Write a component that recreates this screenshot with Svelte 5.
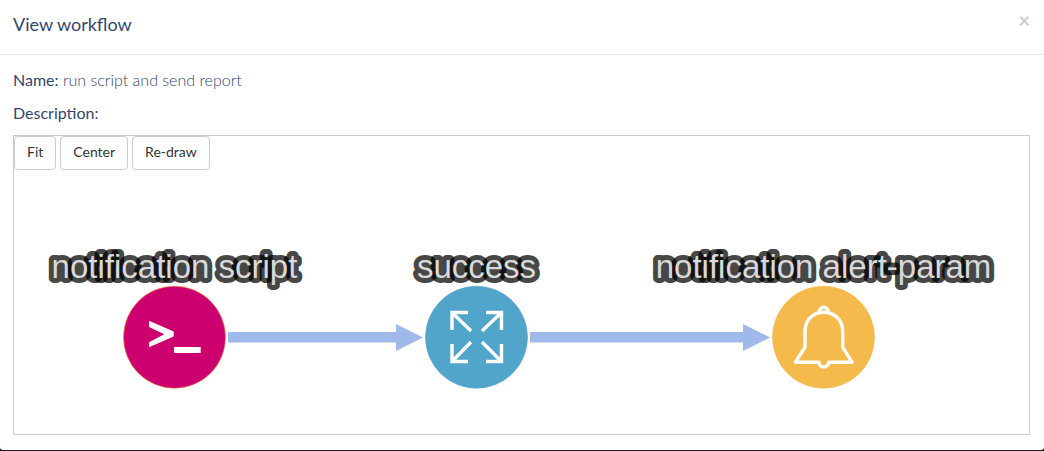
<script>
  const nodes = [
    { id: 'script', label: 'notification script', x: 160.5, fill: '#cc006e', edge: '#e8873a' },
    { id: 'success', label: 'success', x: 462.5, fill: '#51a5cb', edge: '#51a5cb' },
    { id: 'alert', label: 'notification alert-param', x: 809.5, fill: '#f4bb4c', edge: '#f4bb4c' },
  ];
  const edges = [
    { from: 214, to: 409 },
    { from: 516, to: 756 },
  ];
</script>

<div class="modal" role="dialog" aria-labelledby="title">
  <header>
    <h1 id="title">View workflow</h1>
    <button class="close" aria-label="Close">×</button>
  </header>
  <main>
    <p><strong>Name:</strong> run script and send report</p>
    <p><strong>Description:</strong></p>
    <section class="canvas">
      <div class="tools">
        <button>Fit</button>
        <button>Center</button>
        <button>Re-draw</button>
      </div>
      <svg viewBox="0 0 1015 298">
        {#each edges as e}
          <path d="M{e.from} 196H{e.to - 27}V188L{e.to} 201.5L{e.to - 27} 215V206.6H{e.from}Z" fill="#9fb9ea" />
        {/each}
        {#each nodes as n (n.id)}
          <circle cx={n.x} cy="201.2" r="51" fill={n.fill} stroke={n.edge} stroke-width="0.6" />
          <text class="outline" x={n.x} y="142">{n.label}</text>
          <text class="label" x={n.x} y="142">{n.label}</text>
        {/each}
        <path d="M135 184.7L159.7 195.4V200.4L135 211.3V206.3L150.3 198.2L135 191ZM160 211H186.7V217H160Z" fill="#fff" />
        <g class="icon thick">
          <path d="M438 194V176.5H454M438 176.5L457 195M472 176.5H487.5V194M487.5 176.5L468 195M438 208V225.5H454M438 225.5L457 206M472 225.5H487.5V208M487.5 225.5L468 206" />
        </g>
        <g class="icon">
          <path d="M781.3 226.2L791 211.3V195C791 184 799 176.3 809.7 176.3S828.7 184 828.7 195V211.3L838 226.2H814.5A4.8 4.8 0 0 1 804.9 226.2ZM805.2 176A4.5 4.7 0 1 1 814.2 176" />
        </g>
      </svg>
    </section>
  </main>
</div>

<style>
  :global(body) { margin: 0; background: #141821; }
  .modal {
    background: #fff;
    border-radius: 0 0 3px 3px;
    font-family: Lato, sans-serif;
    color: #32466f;
  }
  header {
    display: flex;
    justify-content: space-between;
    align-items: flex-start;
    padding: 11px 14px 17px 13px;
    border-bottom: 1px solid #e5e5e5;
  }
  h1 { margin: 0; font-size: 18px; line-height: 26px; font-weight: 400; }
  .close {
    border: 0;
    padding: 0;
    background: none;
    font: 700 20px/18px Lato, sans-serif;
    color: #ccc;
  }
  main { padding: 13px 14px 15px 13px; }
  p { margin: 0 0 9px; font-size: 16px; line-height: 24px; font-weight: 300; }
  strong { font-weight: 400; }
  .canvas { position: relative; margin-top: 10px; border: 1px solid #ccc; }
  .tools { position: absolute; top: 0; left: 0; display: flex; gap: 4px; }
  .tools button {
    padding: 5px 12px 7px;
    border: 1px solid #ccc;
    border-radius: 4px;
    background: #fff;
    color: #333;
    font: 400 14px/20px Lato, sans-serif;
  }
  svg { display: block; width: 100%; }
  text { font: 33px "Liberation Sans", Arial, sans-serif; text-anchor: middle; }
  .outline { fill: none; stroke: #000; stroke-opacity: 0.73; stroke-width: 10px; stroke-linejoin: round; }
  .label { fill: #d9d9d9; }
  .icon { fill: none; stroke: #fff; stroke-width: 3.4; stroke-linejoin: round; }
  .thick { stroke-linejoin: miter; }
</style>
